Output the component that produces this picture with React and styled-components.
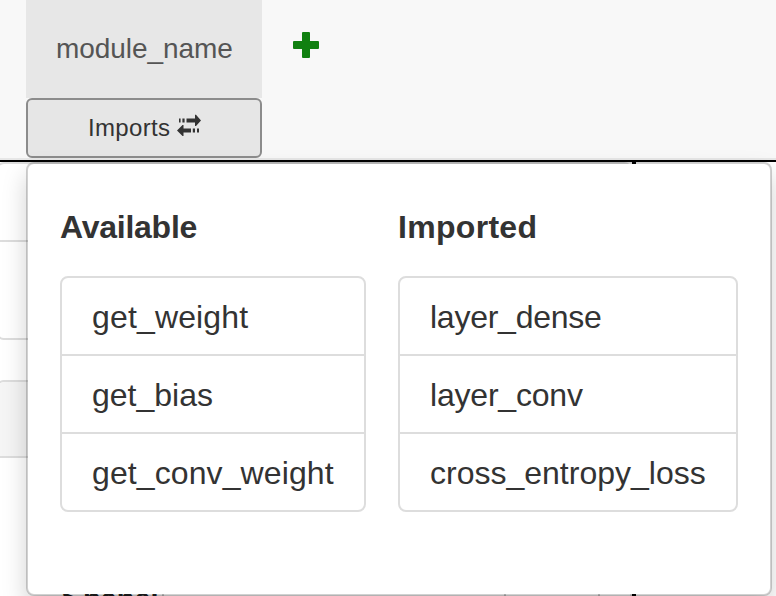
import React from "react";
import styled, { createGlobalStyle } from "styled-components";

const GlobalStyle = createGlobalStyle`
  *, *::before, *::after { box-sizing: border-box; }
  body {
    margin: 0;
    overflow: hidden;
    background: #fff;
    color: #333;
    font-family: "Liberation Sans", Arial, sans-serif;
  }
`;

const Page = styled.div`
  position: relative;
  width: 776px;
  height: 596px;
  overflow: hidden;
`;

const Header = styled.header`
  display: flex;
  align-items: flex-start;
  height: 160px;
  padding-left: 26px;
  background: #f8f8f8;
  border-bottom: 2px solid #e7e7e7;
`;

const TabGroup = styled.div`
  display: flex;
  flex-direction: column;
  width: 236px;
`;

const Tab = styled.div`
  height: 98px;
  padding-left: 30px;
  background: #e7e7e7;
  color: #555;
  font-size: 28px;
  line-height: 97px;
  letter-spacing: -0.06px;
`;

const ImportsButton = styled.button`
  display: flex;
  align-items: center;
  justify-content: flex-start;
  gap: 7px;
  height: 60px;
  padding: 0 0 0 60px;
  border: 2px solid #8c8c8c;
  border-radius: 6px;
  background: #e6e6e6;
  color: #333;
  font-family: inherit;
  font-size: 24px;
  letter-spacing: 0.35px;
`;

const TransferIcon = styled.svg`
  width: 24px;
  height: 24px;
  margin-top: -4px;
`;

const AddButton = styled.button`
  display: flex;
  margin: 32px 0 0 31px;
  padding: 0;
  border: 0;
  background: none;
`;

const Workspace = styled.main`
  display: flex;
  height: 436px;
  border-top: 2px solid #000;
`;

const Column = styled.section`
  flex: none;
  width: 632px;
`;

const Divider = styled.div`
  flex: none;
  width: 4px;
  background: #000;
`;

const PlainList = styled.div`
  height: 178px;
  margin: 0 0 40px -4px;
  border: 2px solid #ddd;
  border-radius: 8px;
`;

const PlainRow = styled.div`
  height: 78px;
  border-bottom: 2px solid #ddd;
`;

const Card = styled.div`
  height: 300px;
  margin-left: -4px;
  border: 2px solid #ddd;
  border-radius: 8px;
  overflow: hidden;
`;

const CardHeading = styled.div`
  height: 76px;
  background: #f5f5f5;
  border-bottom: 2px solid #ddd;
`;

const CardBody = styled.div`
  display: flex;
  padding: 124px 0 0 64px;
`;

const TreeNode = styled.div`
  display: flex;
  align-items: flex-start;
  gap: 4px;
  width: 102px;
  height: 40px;
  border-right: 2px solid #ccc;
  color: #222;
  font-size: 29px;
  font-weight: bold;
  line-height: 34px;
`;

const Caret = styled.span`
  line-height: 36px;
`;

const Cell = styled.div`
  width: ${(p) => p.$width}px;
  height: 40px;
  border-right: 2px solid #ccc;
`;

const Popover = styled.div`
  position: absolute;
  top: 162px;
  left: 26px;
  display: flex;
  align-items: flex-start;
  gap: 32px;
  width: 746px;
  height: 434px;
  padding: 46px 32px 0;
  border: 2px solid rgba(0, 0, 0, 0.18);
  border-radius: 8px;
  background: #fff;
  background-clip: padding-box;
  box-shadow: 0 12px 24px rgba(0, 0, 0, 0.175);
`;

const ImportColumn = styled.section`
  width: ${(p) => p.$width}px;
`;

const Title = styled.h2`
  margin: 0 0 31px;
  font-size: 32px;
  font-weight: bold;
  line-height: 35px;
  letter-spacing: ${(p) => p.$tracking}px;
`;

const List = styled.ul`
  margin: 0;
  padding: 0;
  list-style: none;
  border: 2px solid #ddd;
  border-radius: 8px;
`;

const Item = styled.li`
  height: 78px;
  padding-left: 30px;
  font-size: 32px;
  line-height: 79px;
  letter-spacing: ${(p) => p.$tracking}px;

  &:not(:last-child) { border-bottom: 2px solid #ddd; }
  &:last-child { height: 76px; }
`;

const groups = [
  {
    title: "Available",
    width: 306,
    tracking: -0.25,
    items: [
      { name: "get_weight", tracking: 0.15 },
      { name: "get_bias", tracking: 0 },
      { name: "get_conv_weight", tracking: 0.1 },
    ],
  },
  {
    title: "Imported",
    width: 340,
    tracking: 0.3,
    items: [
      { name: "layer_dense", tracking: -0.25 },
      { name: "layer_conv", tracking: -0.2 },
      { name: "cross_entropy_loss", tracking: 0 },
    ],
  },
];

export default function App() {
  return (
    <Page>
      <GlobalStyle />
      <Header>
        <TabGroup>
          <Tab>module_name</Tab>
          <ImportsButton>
            Imports
            <TransferIcon viewBox="0 0 24 24" fill="#333" aria-hidden="true">
              <path d="M2 4.5h1.6v4H2zM5.4 4.5h2.2v4H5.4zM9.5 4.5H18V.8h1L24 6.500 19 12h-1V8.500H9.500z" />
              <path d="M0 16.5 5.500 11h1v3.500H14v4H6.500V22h-1zM15.800 14.500H18v4h-2.200zM20 14.500h2v4h-2z" />
            </TransferIcon>
          </ImportsButton>
        </TabGroup>
        <AddButton aria-label="Add module">
          <svg width="26" height="26" viewBox="0 0 26 26" fill="#108010">
            <path d="M10 0h6q1 0 1 1v8h8q1 0 1 1v6q0 1-1 1h-8v8q0 1-1 1h-6q-1 0-1-1v-8H1q-1 0-1-1v-6q0-1 1-1h8V1q0-1 1-1z" />
          </svg>
        </AddButton>
      </Header>
      <Workspace>
        <Column>
          <PlainList>
            <PlainRow />
          </PlainList>
          <Card>
            <CardHeading />
            <CardBody>
              <TreeNode>
                <Caret>&gt;</Caret>
                panel
              </TreeNode>
              <Cell $width={342} />
              <Cell $width={94} />
            </CardBody>
          </Card>
        </Column>
        <Divider />
      </Workspace>
      <Popover>
        {groups.map((group) => (
          <ImportColumn key={group.title} $width={group.width}>
            <Title $tracking={group.tracking}>{group.title}</Title>
            <List>
              {group.items.map((item) => (
                <Item key={item.name} $tracking={item.tracking}>
                  {item.name}
                </Item>
              ))}
            </List>
          </ImportColumn>
        ))}
      </Popover>
    </Page>
  );
}
